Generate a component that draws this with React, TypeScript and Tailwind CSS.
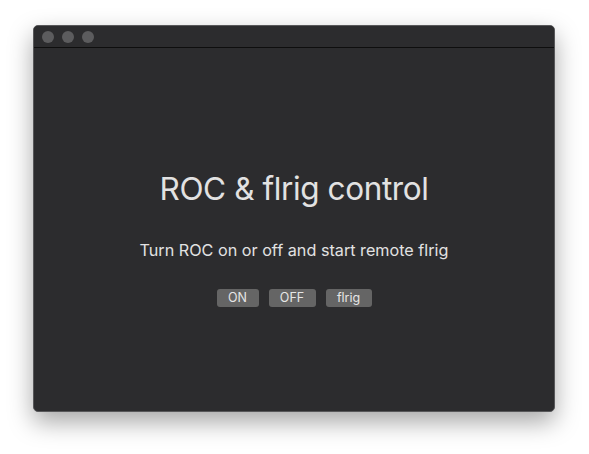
import React from "react";

export default function App() {
  return (
    <div className="w-[589px] h-[454px] bg-white pt-[25px] pl-[33px]" style={{ fontFamily: "Inter, 'Noto Sans', sans-serif" }}>
      <div className="w-[522px] h-[387px] rounded-[5px] bg-[#2c2c2e] border border-[#58585a] shadow-[0_10px_25px_rgba(0,0,0,0.35)] flex flex-col overflow-hidden">
        <div className="h-[22px] flex items-center gap-[8px] pl-[8px] border-b border-b-[#0e0e0e] bg-[#2c2c2e]">
          <div className="w-[12px] h-[12px] rounded-full bg-[#5c5c5e]" />
          <div className="w-[12px] h-[12px] rounded-full bg-[#5c5c5e]" />
          <div className="w-[12px] h-[12px] rounded-full bg-[#5c5c5e]" />
        </div>
        <div className="flex-1 flex flex-col items-center">
          <div className="mt-[121px] text-[31.5px] leading-[40px] text-[#e2e2e2] tracking-[-0.4px]">ROC &amp; flrig control</div>
          <div className="mt-[31px] text-[16.2px] leading-[20px] text-[#e2e2e2]">Turn ROC on or off and start remote flrig</div>
          <div className="mt-[29px] flex gap-[10px]">
            <button className="w-[42px] h-[18px] rounded-[3px] bg-[#656565] text-[12.5px] leading-[18px] text-[#e6e6e6]">ON</button>
            <button className="w-[47px] h-[18px] rounded-[3px] bg-[#656565] text-[12.5px] leading-[18px] text-[#e6e6e6]">OFF</button>
            <button className="w-[46px] h-[18px] rounded-[3px] bg-[#656565] text-[12.5px] leading-[18px] text-[#e6e6e6]">flrig</button>
          </div>
        </div>
      </div>
    </div>
  );
}
